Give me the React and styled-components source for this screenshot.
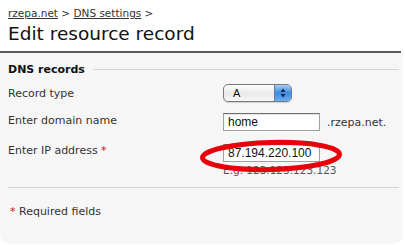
import React from 'react';
import styled, { createGlobalStyle } from 'styled-components';

const GlobalStyle = createGlobalStyle`
  html, body {
    margin: 0;
    padding: 0;
    background: #ffffff;
  }
  body {
    font-family: "DejaVu Sans", Verdana, sans-serif;
    color: #333333;
  }
`;

const Page = styled.div`
  width: 405px;
  height: 245px;
  position: relative;
  overflow: hidden;
`;

const Header = styled.div`
  padding: 6px 8px 0 8px;
  height: 45px;
  border-bottom: 2px solid #5a5a5a;
  margin-right: 4px;
`;

const Crumbs = styled.div`
  font-size: 10.5px;
  line-height: 14px;
  color: #333;
  a {
    color: #333;
    text-decoration: underline;
  }
`;

const Title = styled.h1`
  margin: 3px 0 0 0;
  font-weight: normal;
  font-size: 18.5px;
  line-height: 22px;
  color: #111;
`;

const Panel = styled.div`
  background: #f7f6f7;
  margin-right: 2px;
  height: 191px;
  border-radius: 0 0 10px 10px;
  padding: 0 4px 0 8px;
  box-sizing: border-box;
`;

const Legend = styled.div`
  display: flex;
  align-items: center;
  gap: 8px;
  padding-top: 10px;
  font-size: 11px;
  font-weight: bold;
  color: #111;
  &::after {
    content: '';
    flex: 1;
    height: 1px;
    background: #d4d4d4;
  }
`;

const Row = styled.div`
  display: grid;
  grid-template-columns: 215px 1fr;
  align-items: start;
  margin-top: ${p => p.$top}px;
  font-size: 11px;
`;

const Label = styled.div`
  padding-top: ${p => p.$pad || 0}px;
  color: #333;
`;

const Req = styled.span`
  color: #d01010;
`;

const Field = styled.div`
  display: flex;
  align-items: center;
  gap: 7px;
`;

const Select = styled.div`
  width: 69px;
  height: 18px;
  box-sizing: border-box;
  border: 1px solid #7a7a7a;
  border-radius: 5px;
  display: flex;
  overflow: hidden;
  background: linear-gradient(#ffffff, #e9e9e9 55%, #f8f8f8);
  font-family: "Liberation Sans", Arial, sans-serif;
  font-size: 11px;
  color: #111;
  box-shadow: 0 1px 1px rgba(0,0,0,0.15);
`;

const SelectText = styled.div`
  flex: 1;
  padding-left: 9px;
  line-height: 16px;
`;

const Stepper = styled.div`
  width: 16px;
  background: linear-gradient(#a6cdf5, #3f8ae0 50%, #6aaef0);
  border-left: 1px solid #5b7fb0;
  display: flex;
  align-items: center;
  justify-content: center;
`;

const Input = styled.div`
  width: 97px;
  height: 18px;
  box-sizing: border-box;
  border: 1px solid #a0a0a0;
  border-top-color: #707070;
  background: #ffffff;
  box-shadow: inset 0 1px 1px rgba(0,0,0,0.12);
  font-family: "Liberation Sans", Arial, sans-serif;
  font-size: 12px;
  line-height: 16px;
  padding-left: 4px;
  color: #111;
`;

const Suffix = styled.span`
  color: #333;
`;

const Hint = styled.div`
  font-size: 10.5px;
  color: #555;
  margin-top: 2px;
`;

const Divider = styled.div`
  height: 1px;
  background: #d4d4d4;
  margin-top: 11px;
`;

const Footer = styled.div`
  padding-top: 17px;
  padding-left: 2px;
  font-size: 11px;
  color: #333;
`;

const IpField = styled.div`
  position: relative;
`;

const Circle = styled.svg`
  position: absolute;
  left: -26px;
  top: -6px;
  pointer-events: none;
`;

export default function App() {
  return (
    <Page>
      <GlobalStyle />
      <Header>
        <Crumbs>
          <a>rzepa.net</a> &gt; <a>DNS settings</a> &gt;
        </Crumbs>
        <Title>Edit resource record</Title>
      </Header>
      <Panel>
        <Legend>DNS records</Legend>
        <Row $top={8}>
          <Label $pad={3}>Record type</Label>
          <Field>
            <Select>
              <SelectText>A</SelectText>
              <Stepper>
                <svg width="6" height="10" viewBox="0 0 6 10">
                  <path d="M3 0.5 L5.5 4 L0.5 4 Z M3 9.5 L5.5 6 L0.5 6 Z" fill="#0c2a5a" />
                </svg>
              </Stepper>
            </Select>
          </Field>
        </Row>
        <Row $top={11}>
          <Label $pad={1}>Enter domain name</Label>
          <Field>
            <Input>home</Input>
            <Suffix>.rzepa.net.</Suffix>
          </Field>
        </Row>
        <Row $top={13}>
          <Label $pad={0}>Enter IP address <Req>*</Req></Label>
          <IpField>
            <Input>87.194.220.100</Input>
            <Hint>E.g. 123.123.123.123</Hint>
            <Circle width="150" height="36" viewBox="0 0 150 36">
              <ellipse cx="74" cy="18" rx="68.5" ry="13.5" fill="none" stroke="#e8000b" strokeWidth="5" transform="rotate(-1.5 74 18)" />
            </Circle>
          </IpField>
        </Row>
        <Divider />
        <Footer><Req>*</Req> Required fields</Footer>
      </Panel>
    </Page>
  );
}
